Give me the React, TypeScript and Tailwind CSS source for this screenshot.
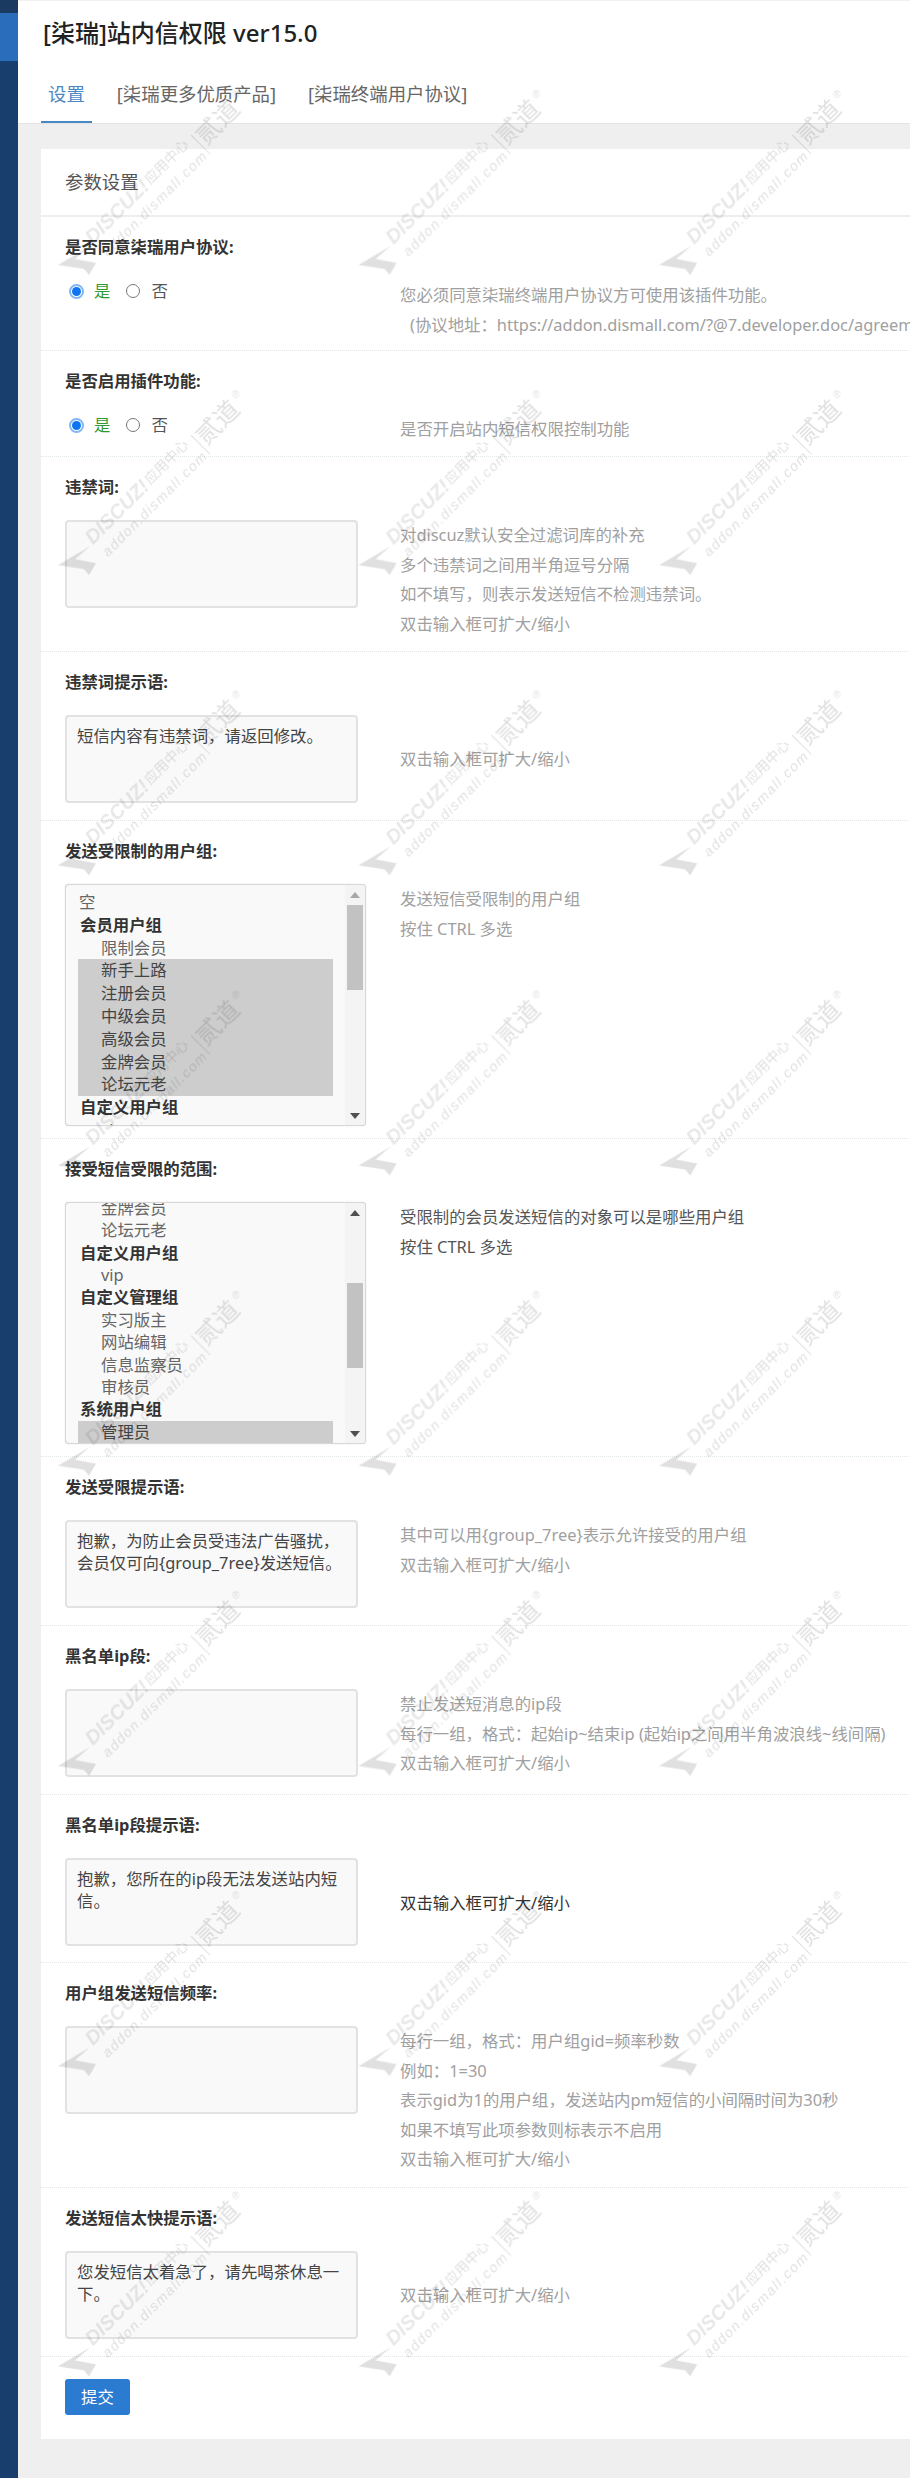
import { type ReactNode } from "react";

type Option = { text: string; kind: "plain" | "group" | "item"; selected?: boolean };

const memberOptions: Option[] = [
  { text: "空", kind: "plain" },
  { text: "会员用户组", kind: "group" },
  { text: "限制会员", kind: "item" },
  { text: "新手上路", kind: "item", selected: true },
  { text: "注册会员", kind: "item", selected: true },
  { text: "中级会员", kind: "item", selected: true },
  { text: "高级会员", kind: "item", selected: true },
  { text: "金牌会员", kind: "item", selected: true },
  { text: "论坛元老", kind: "item", selected: true },
  { text: "自定义用户组", kind: "group" },
  { text: "vip", kind: "item" },
];

const scopeOptions: Option[] = [
  { text: "金牌会员", kind: "item" },
  { text: "论坛元老", kind: "item" },
  { text: "自定义用户组", kind: "group" },
  { text: "vip", kind: "item" },
  { text: "自定义管理组", kind: "group" },
  { text: "实习版主", kind: "item" },
  { text: "网站编辑", kind: "item" },
  { text: "信息监察员", kind: "item" },
  { text: "审核员", kind: "item" },
  { text: "系统用户组", kind: "group" },
  { text: "管理员", kind: "item", selected: true },
];

const HINT = "双击输入框可扩大/缩小";

function Row({ height, label, children }: { height: string; label: string; children: ReactNode }) {
  return (
    <div className={`${height} box-border border-b border-dotted border-[#e2e8e8] px-6 pt-[19px]`}>
      <div className="mb-[22px] text-[16.4px] font-bold leading-[22px] text-[#333]">{label}</div>
      <div className="flex">{children}</div>
    </div>
  );
}

function Desc({ lines, top = "", color = "text-[#a0a0a0]" }: { lines: string[]; top?: string; color?: string }) {
  return (
    <div className={`whitespace-nowrap text-[16.4px] leading-[29.5px] ${top} ${color}`}>
      {lines.map((line) => (
        <div key={line} className={line.startsWith("(") ? "pl-[10px]" : ""}>
          {line}
        </div>
      ))}
    </div>
  );
}

function Radios() {
  return (
    <div className="flex h-[22px] w-[335px] shrink-0 items-center text-[16.4px] leading-[22px]">
      <span className="ml-[4px] flex h-[15px] w-[15px] shrink-0 items-center justify-center rounded-full border-2 border-[#7fb6f5]">
        <span className="h-[9px] w-[9px] rounded-full bg-[#0f74f0]" />
      </span>
      <span className="ml-[10px] shrink-0 text-[#2f9a35]">是</span>
      <span className="ml-[16px] h-[14px] w-[14px] shrink-0 rounded-full border border-[#777]" />
      <span className="ml-[11px] shrink-0 text-[#555]">否</span>
    </div>
  );
}

function Area({ value = "" }: { value?: string }) {
  return (
    <div className="w-[335px] shrink-0">
      <textarea
        readOnly
        defaultValue={value}
        className="block h-[88px] w-[293px] resize-none rounded-[4px] border-2 border-[#e2e2e2] bg-[#f9f9f9] px-[10px] py-[8px] text-[16.4px] leading-[22px] text-[#444] outline-none"
      />
    </div>
  );
}

function GroupList({
  options,
  rowHeight,
  listTop,
  thumbTop,
  upArrow,
}: {
  options: Option[];
  rowHeight: string;
  listTop: string;
  thumbTop: string;
  upArrow: string;
}) {
  return (
    <div className="w-[335px] shrink-0">
      <div className="flex h-[242px] w-[301px] overflow-hidden rounded-[4px] border border-[#d8d8d8] bg-[#f9f9f9] text-[16.4px] shadow-[0_0_1px_rgba(0,0,0,0.25)]">
        <div className="min-w-0 flex-1 overflow-hidden">
          <div className={`ml-[12px] mr-[12px] ${listTop}`}>
            {options.map((opt) => (
              <div
                key={opt.text}
                className={[
                  "flex items-center whitespace-nowrap",
                  rowHeight,
                  opt.selected ? "bg-[#cdcdcd] text-[#444]" : "text-[#666]",
                  opt.kind === "group" ? "pl-[2px] font-bold !text-[#333]" : "",
                  opt.kind === "item" ? "pl-[23px]" : "",
                  opt.kind === "plain" ? "pl-[1px]" : "",
                ].join(" ")}
              >
                {opt.text}
              </div>
            ))}
          </div>
        </div>
        <div className="flex w-[20px] shrink-0 flex-col bg-[#f4f4f4]">
          <div className="flex h-[19px] shrink-0 items-center justify-center pr-[1px]">
            <svg width="10" height="6" viewBox="0 0 10 6">
              <path d="M5 0 L10 6 L0 6 Z" fill={upArrow} />
            </svg>
          </div>
          <div className="min-h-0 flex-1">
            <div className={`mx-auto h-[85px] w-[16px] bg-[#c2c2c2] ${thumbTop}`} />
          </div>
          <div className="flex h-[19px] shrink-0 items-center justify-center pr-[1px]">
            <svg width="10" height="6" viewBox="0 0 10 6">
              <path d="M0 0 L10 0 L5 6 Z" fill="#505050" />
            </svg>
          </div>
        </div>
      </div>
    </div>
  );
}

function Watermark() {
  return (
    <svg className="pointer-events-none absolute left-0 top-0" width="910" height="2478" viewBox="0 0 910 2478">
      <defs>
        <pattern id="wm" patternUnits="userSpaceOnUse" x="48" y="65" width="300.6" height="300.2">
          <polygon points="10,200 42,181 27,194 48,198 41,210 36,204" fill="#000" fillOpacity="0.12" />
          <g fill="#000" fillOpacity="0.12" fontFamily="'Liberation Sans', 'Noto Sans CJK SC', sans-serif">
            <text x="45" y="180" fontSize="20" fontStyle="italic" fontWeight="700" transform="rotate(-45 45 180)" fillOpacity="0.09">
              DISCUZ!
            </text>
            <text x="102" y="120" fontSize="14" fontFamily="'Noto Sans CJK SC', sans-serif" transform="rotate(-45 102 120)">
              应用中心
            </text>
            <text x="60" y="192" fontSize="14" fontStyle="italic" letterSpacing="1.5" transform="rotate(-45 60 192)">
              addon.dismall.com
            </text>
            <text x="158" y="81" fontSize="25" fontFamily="'Noto Sans CJK SC', sans-serif" transform="rotate(-45 158 81)">
              贰道
            </text>
            <text x="184" y="33" fontSize="10">®</text>
          </g>
          <line x1="143" y1="70" x2="162" y2="89" stroke="#000" strokeOpacity="0.13" />
        </pattern>
      </defs>
      <rect width="910" height="2478" fill="url(#wm)" />
    </svg>
  );
}

export default function App() {
  return (
    <div className="relative flex h-[2478px] w-[910px] overflow-hidden bg-[#efefef] font-['Noto_Sans','Noto_Sans_CJK_SC',sans-serif]">
      <aside className="w-[18px] shrink-0 bg-[#173e6c]">
        <div className="h-[13px] bg-[#1a3a62]" />
        <div className="h-[48px] bg-[#2a6dbb]" />
      </aside>

      <div className="min-w-0 flex-1">
        <header className="h-[124px] border-b border-t border-[#e4e4e4] border-t-[#f0f0f0] bg-white pl-[23px]">
          <h1 className="flex h-[63px] items-center pl-[2px] text-[24px] font-medium text-[#222]">[柒瑞]站内信权限 ver15.0</h1>
          <nav className="flex h-[59px] gap-[18px] text-[18.4px] text-[#666]">
            <span className="flex items-center border-b-2 border-[#4a88c4] px-[7px] pt-[3px] text-[#4a88c4]">设置</span>
            <span className="flex items-center px-[7px] pt-[1px]">[柒瑞更多优质产品]</span>
            <span className="flex items-center px-[7px] pt-[1px]">[柒瑞终端用户协议]</span>
          </nav>
        </header>

        <div className="pl-[23px] pt-[25px]">
          <section className="w-[900px] bg-white">
            <div className="flex h-[68px] items-center border-b-2 border-[#eeeeee] px-6 text-[18.4px] text-[#555]">参数设置</div>

            <Row height="h-[134px]" label="是否同意柒瑞用户协议:">
              <Radios />
              <Desc lines={["您必须同意柒瑞终端用户协议方可使用该插件功能。", "(协议地址：https://addon.dismall.com/?@7.developer.doc/agreement"]} />
            </Row>
            <Row height="h-[106px]" label="是否启用插件功能:">
              <Radios />
              <Desc lines={["是否开启站内短信权限控制功能"]} />
            </Row>
            <Row height="h-[195px]" label="违禁词:">
              <Area />
              <Desc lines={["对discuz默认安全过滤词库的补充", "多个违禁词之间用半角逗号分隔", "如不填写，则表示发送短信不检测违禁词。", HINT]} />
            </Row>
            <Row height="h-[169px]" label="违禁词提示语:">
              <Area value="短信内容有违禁词，请返回修改。" />
              <Desc top="mt-[29px]" lines={[HINT]} />
            </Row>
            <Row height="h-[318px]" label="发送受限制的用户组:">
              <GroupList options={memberOptions} rowHeight="h-[22.8px]" listTop="mt-[6px]" thumbTop="mt-[1px]" upArrow="#a8a8a8" />
              <Desc lines={["发送短信受限制的用户组", "按住 CTRL 多选"]} />
            </Row>
            <Row height="h-[318px]" label="接受短信受限的范围:">
              <GroupList options={scopeOptions} rowHeight="h-[22.4px]" listTop="-mt-[6px]" thumbTop="mt-[61px]" upArrow="#505050" />
              <Desc color="text-[#555]" lines={["受限制的会员发送短信的对象可以是哪些用户组", "按住 CTRL 多选"]} />
            </Row>
            <Row height="h-[169px]" label="发送受限提示语:">
              <Area value="抱歉，为防止会员受违法广告骚扰，会员仅可向{group_7ree}发送短信。" />
              <Desc lines={["其中可以用{group_7ree}表示允许接受的用户组", HINT]} />
            </Row>
            <Row height="h-[169px]" label="黑名单ip段:">
              <Area />
              <Desc lines={["禁止发送短消息的ip段", "每行一组，格式：起始ip~结束ip (起始ip之间用半角波浪线~线间隔)", HINT]} />
            </Row>
            <Row height="h-[168px]" label="黑名单ip段提示语:">
              <Area value="抱歉，您所在的ip段无法发送站内短信。" />
              <Desc top="mt-[30px]" color="text-[#333]" lines={[HINT]} />
            </Row>
            <Row height="h-[225px]" label="用户组发送短信频率:">
              <Area />
              <Desc lines={["每行一组，格式：用户组gid=频率秒数", "例如：1=30", "表示gid为1的用户组，发送站内pm短信的小间隔时间为30秒", "如果不填写此项参数则标表示不启用", HINT]} />
            </Row>
            <Row height="h-[169px]" label="发送短信太快提示语:">
              <Area value="您发短信太着急了，请先喝茶休息一下。" />
              <Desc top="mt-[29px]" lines={[HINT]} />
            </Row>

            <div className="px-6 pb-6 pt-[22px]">
              <button className="h-[36px] w-[65px] rounded-[3px] bg-[#2b7bd1] text-[16.4px] text-white">提交</button>
            </div>
          </section>
        </div>
      </div>

      <Watermark />
    </div>
  );
}
